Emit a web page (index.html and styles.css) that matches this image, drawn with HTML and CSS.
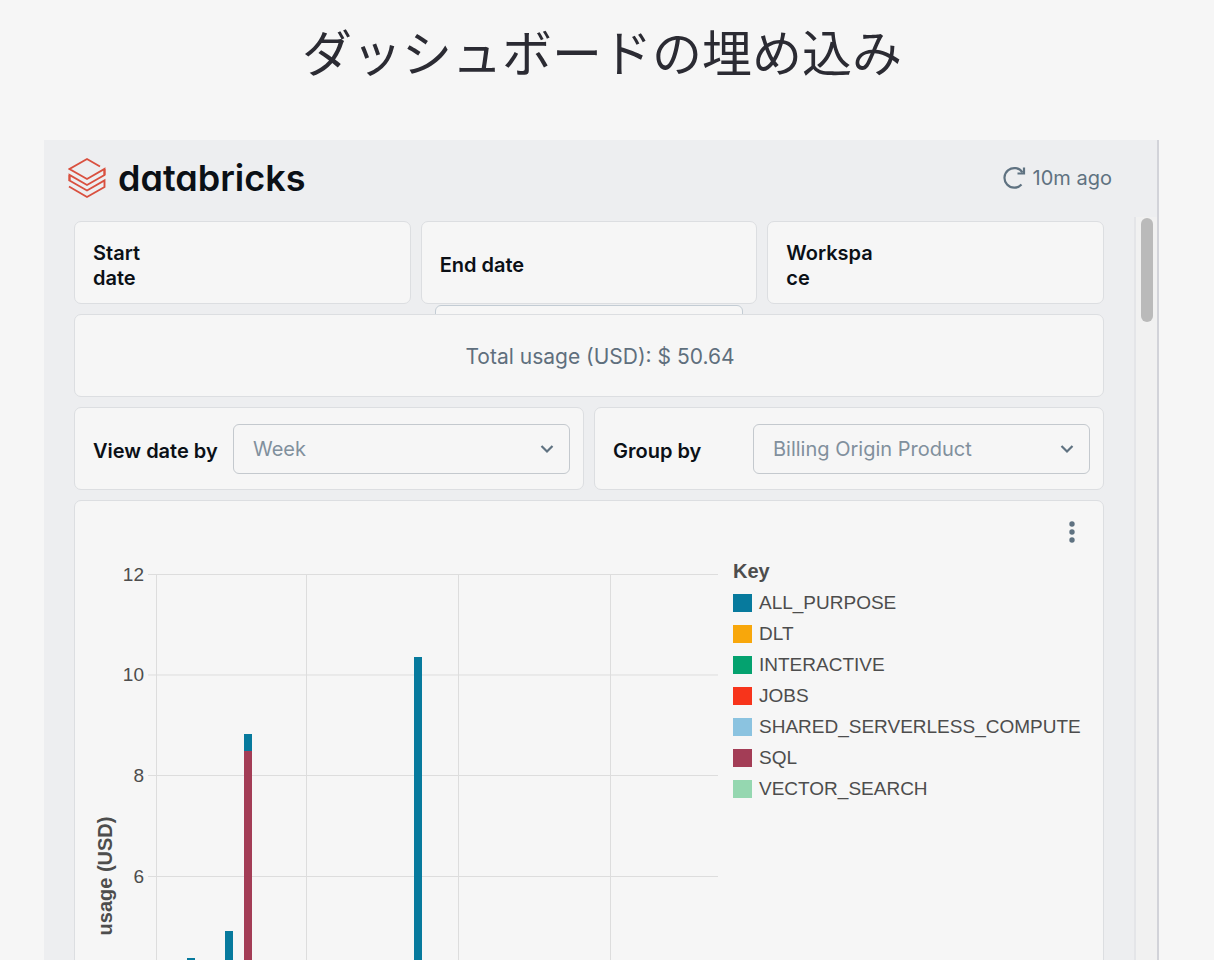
FILE: index.html
```html
<!DOCTYPE html>
<html lang="ja">
<head>
  <meta charset="UTF-8" />
  <meta name="viewport" content="width=device-width, initial-scale=1.0" />
  <title>ダッシュボードの埋め込み</title>
  <link rel="stylesheet" href="styles.css">
</head>
<body>
  <h1 class="page-title">ダッシュボードの埋め込み</h1>

  <main class="dashboard" lang="en">
    <header class="header">
      <a href="#" class="brand">
        <svg class="brand-icon" width="38" height="42" viewBox="0 0 38 42" fill="none" stroke="#d9503f" stroke-width="1.9">
          <path d="M32 9.500L19 2L1.500 12L19 22L36.500 12V18L19 28L1.500 18V23.500L19 33.500L36.500 23.500V30L19 40L1 29.500" />
          <path d="M1.500 18V24M36.500 12V18" />
        </svg>
        <span class="brand-name">databricks</span>
      </a>
      <button type="button" class="refresh">
        <svg width="24" height="24" viewBox="0 0 24 24" fill="none" stroke="#5f7281" stroke-width="2.2">
          <path d="M19.500 18.500A9.800 9.800 0 1 1 20.500 6.500" />
          <path d="M22 1.500V7.500H15.500" />
        </svg>
        10m ago
      </button>
    </header>

    <div class="scroll-area">
      <div class="content">
        <div class="row">
          <div class="card filter narrow">
            <span class="label">Start date</span>
          </div>
          <div class="card filter narrow">
            <label class="label wide" for="end-date">End date</label>
            <input type="text" id="end-date" class="date-input" />
          </div>
          <div class="card filter narrow">
            <span class="label">Workspace</span>
          </div>
        </div>

        <div class="card total">Total usage (USD): $ 50.64</div>

        <div class="row">
          <div class="card filter">
            <label class="label" for="view-date">View date by</label>
            <div class="select-box">
              <select id="view-date">
                <option>Week</option>
                <option>Day</option>
                <option>Month</option>
              </select>
              <svg class="chevron" width="14" height="10" viewBox="0 0 14 10" fill="none" stroke="#5f7281" stroke-width="2.200"><path d="M1.500 2L7 7.500L12.500 2" /></svg>
            </div>
          </div>
          <div class="card filter">
            <label class="label" for="group-by">Group by</label>
            <div class="select-box">
              <select id="group-by">
                <option>Billing Origin Product</option>
                <option>Workspace</option>
              </select>
              <svg class="chevron" width="14" height="10" viewBox="0 0 14 10" fill="none" stroke="#5f7281" stroke-width="2.200"><path d="M1.500 2L7 7.500L12.500 2" /></svg>
            </div>
          </div>
        </div>

        <section class="card chart-card">
          <div class="chart-menu">
            <button type="button" class="kebab" aria-label="Chart menu">
              <svg width="6" height="24" viewBox="0 0 6 24" fill="#5f7281">
                <circle cx="3" cy="4" r="2.700" /><circle cx="3" cy="12" r="2.700" /><circle cx="3" cy="20" r="2.700" />
              </svg>
            </button>
          </div>
          <div class="chart-body">
            <svg class="chart" viewBox="0 0 628 640" role="img" aria-label="usage (USD)">
              <g class="grid">
                <path d="M56 14.500H626M56 115H626M56 215.500H626M56 316.500H626M56 417H626M56 517.500H626M56 618H626" />
                <path d="M64.500 14V618M214.500 14V618M366.500 14V618M518.500 14V618" />
              </g>
              <g class="ticks">
                <text x="52" y="21">12</text>
                <text x="52" y="121">10</text>
                <text x="52" y="222">8</text>
                <text x="52" y="323">6</text>
              </g>
              <text class="axis-title" transform="translate(20 316) rotate(-90)">usage (USD)</text>
              <g fill="#077a9d">
                <rect x="95" y="398" width="8" height="220" />
                <rect x="133" y="371" width="8" height="247" />
                <rect x="152" y="174" width="8" height="17" />
                <rect x="322" y="97" width="8" height="521" />
              </g>
              <rect x="152" y="191" width="8" height="427" fill="#a33d56" />
            </svg>

            <div class="legend">
              <h2>Key</h2>
              <ul>
                <li><i class="swatch all-purpose"></i>ALL_PURPOSE</li>
                <li><i class="swatch dlt"></i>DLT</li>
                <li><i class="swatch interactive"></i>INTERACTIVE</li>
                <li><i class="swatch jobs"></i>JOBS</li>
                <li><i class="swatch serverless"></i>SHARED_SERVERLESS_COMPUTE</li>
                <li><i class="swatch sql"></i>SQL</li>
                <li><i class="swatch vector"></i>VECTOR_SEARCH</li>
              </ul>
            </div>
          </div>
        </section>
      </div>
      <div class="scroll-track"><div class="scroll-thumb"></div></div>
    </div>
  </main>
</body>
</html>
```
FILE: styles.css
```css
* {
  box-sizing: border-box;
}
body {
  margin: 0;
  height: 100vh;
  overflow: hidden;
  display: flex;
  flex-direction: column;
  background: #f6f6f6;
  font-family: Inter, "Noto Sans CJK JP", sans-serif;
  font-size: 20px;
}
.page-title {
  flex: none;
  margin: 0;
  height: 140px;
  padding: 14px 10px 0 0;
  text-align: center;
  font-family: "Noto Sans CJK JP", sans-serif;
  font-size: 50px;
  font-weight: 400;
  line-height: 72px;
  color: #2b2b33;
}
.dashboard {
  flex: 1;
  min-height: 0;
  display: flex;
  flex-direction: column;
  margin: 0 55px 0 44px;
  background: #edeef0;
  border-right: 2px solid #d2d3d9;
}
.header {
  flex: none;
  display: flex;
  justify-content: space-between;
  align-items: center;
  height: 77px;
  padding: 0 45px 2px 24px;
}
.brand {
  display: flex;
  align-items: center;
  gap: 12px;
  color: #0b1016;
  text-decoration: none;
}
.brand-name {
  font-size: 36px;
  font-weight: 600;
  line-height: 40px;
  font-feature-settings: "cv11";
}
.refresh {
  display: flex;
  align-items: center;
  gap: 7px;
  padding: 0;
  border: none;
  background: none;
  font: inherit;
  color: #5f7281;
  cursor: pointer;
}
.scroll-area {
  flex: 1;
  min-height: 0;
  display: flex;
}
.content {
  flex: 1;
  display: flex;
  flex-direction: column;
  gap: 10px;
  padding: 4px 30px 0;
  overflow: hidden;
}
.scroll-track {
  width: 23px;
  padding: 1px 4px 0 5px;
  background: #f1f1f1;
  border-left: 2px solid #e4e5e8;
}
.scroll-thumb {
  height: 104px;
  border-radius: 6px;
  background: #bababa;
}
.row {
  display: flex;
  gap: 10px;
}
.card {
  flex: none;
  background: #f6f6f6;
  border: 1px solid #dcdee1;
  border-radius: 7px;
}
.row .card {
  flex: 1;
}
.filter {
  position: relative;
  display: flex;
  align-items: center;
  height: 83px;
  padding: 0 13px 0 18px;
}
.label {
  flex: none;
  width: 140px;
  padding-top: 6px;
  line-height: 25px;
  font-weight: 600;
  color: #0b1016;
}
.narrow .label {
  width: 88px;
  overflow-wrap: anywhere;
}
.narrow .wide {
  width: 140px;
}
/* input drops below its card and is covered by the next one */
.date-input {
  position: absolute;
  top: 83px;
  left: 13px;
  right: 13px;
  height: 50px;
  background: #f6f6f6;
  border: 1px solid #c3ccd4;
  border-radius: 6px;
}
.total {
  position: relative;
  z-index: 1;
  height: 83px;
  padding-left: 22px;
  text-align: center;
  font-size: 21px;
  line-height: 84px;
  color: #5f6f7d;
}
.select-box {
  position: relative;
  flex: 1;
}
select {
  display: block;
  width: 100%;
  height: 50px;
  padding: 0 40px 0 19px;
  appearance: none;
  background: #f6f6f6;
  border: 1px solid #c4c9ce;
  border-radius: 6px;
  font: inherit;
  color: #81909d;
}
.chevron {
  position: absolute;
  top: 20px;
  right: 16px;
  pointer-events: none;
}
.chart-card {
  padding-left: 17px;
}
.chart-menu {
  display: flex;
  justify-content: flex-end;
  height: 59px;
  padding: 19px 28px 0 0;
}
.kebab {
  display: block;
  height: 24px;
  padding: 0;
  border: none;
  background: none;
  cursor: pointer;
}
.chart-body {
  display: grid;
  grid-template-columns: minmax(0, 1fr) 370px;
  gap: 13px;
  font-family: "Liberation Sans", Arial, sans-serif;
  color: #4d4d4d;
}
.chart {
  display: block;
  width: 100%;
}
.grid {
  stroke: #dddddd;
  fill: none;
}
.ticks {
  font-size: 19px;
  fill: #4d4d4d;
  text-anchor: end;
}
.axis-title {
  font-size: 20px;
  font-weight: 700;
  fill: #4d4d4d;
  text-anchor: middle;
}
.legend h2 {
  margin: 0;
  font-size: 20px;
  line-height: 22px;
}
.legend ul {
  list-style: none;
  margin: 0;
  padding: 5px 0 0;
}
.legend li {
  display: flex;
  align-items: center;
  gap: 7px;
  height: 31px;
  font-size: 19px;
}
.swatch {
  width: 19px;
  height: 18px;
}
.all-purpose { background: #077a9d; }
.dlt { background: #f8a70b; }
.interactive { background: #04a26f; }
.jobs { background: #f7341b; }
.serverless { background: #8bc3e0; }
.sql { background: #a33d56; }
.vector { background: #95d7b0; }
```
